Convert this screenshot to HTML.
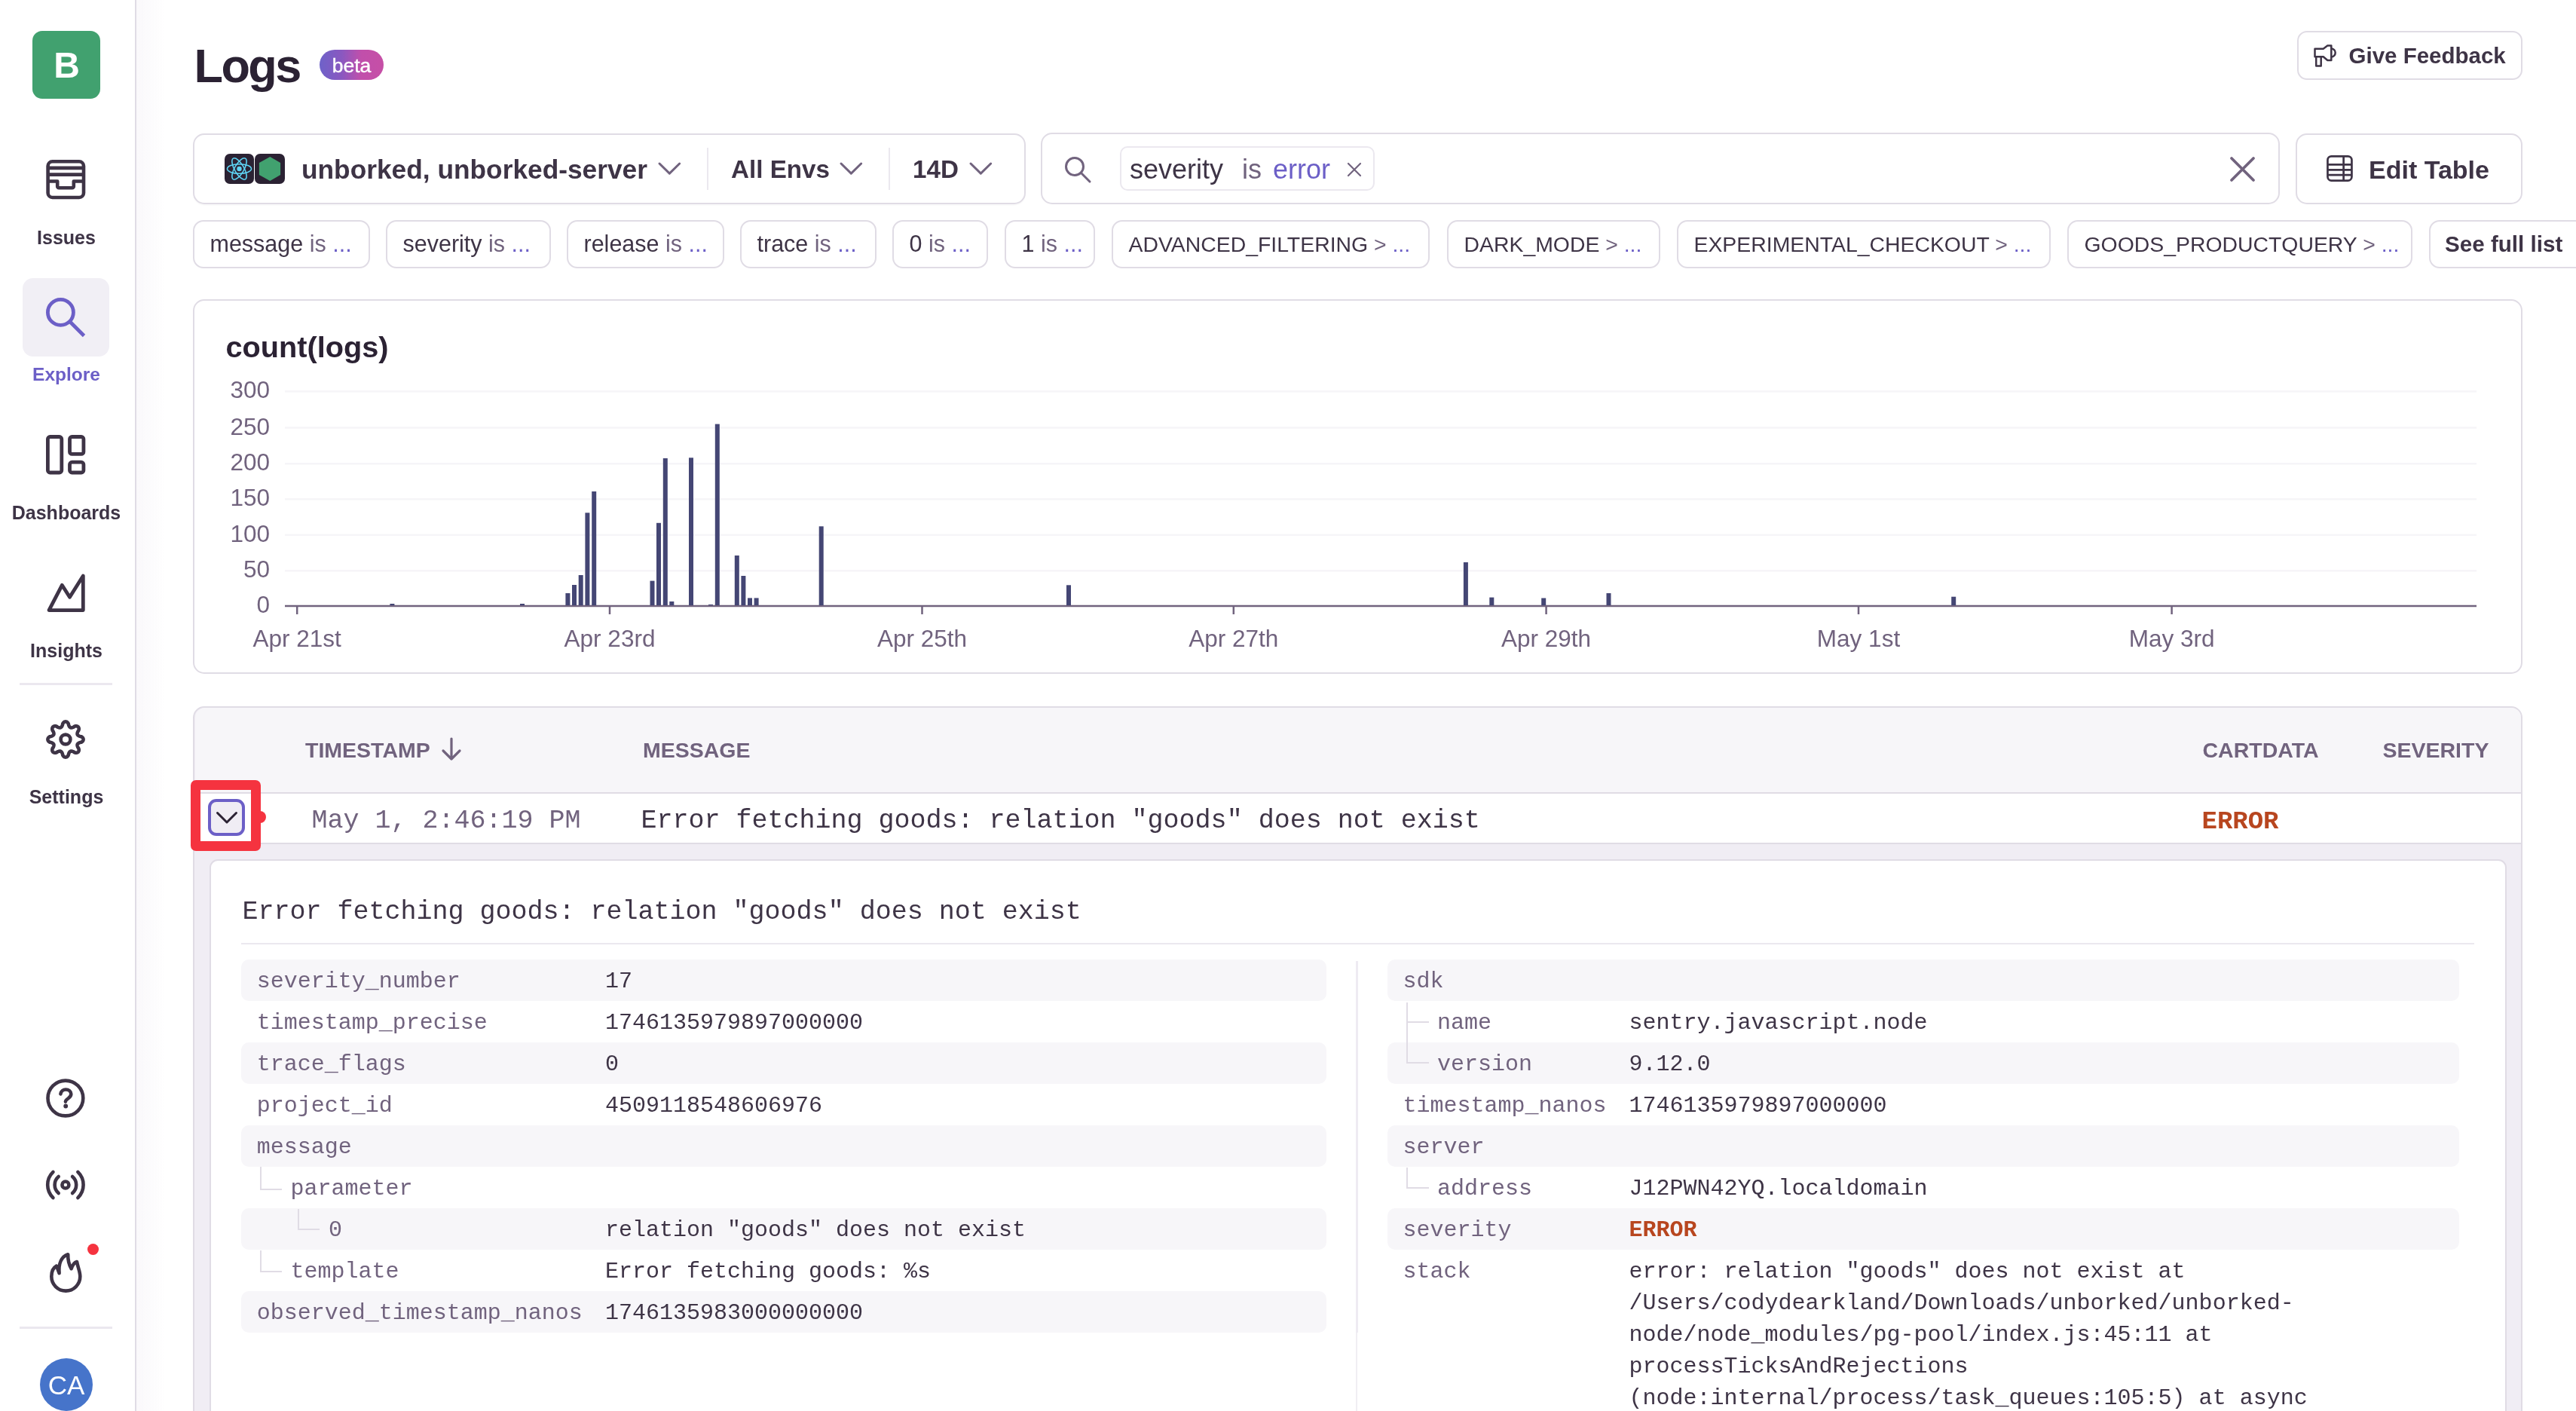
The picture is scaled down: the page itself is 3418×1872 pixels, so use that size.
<!DOCTYPE html>
<html><head><meta charset="utf-8"><style>
html,body{margin:0;padding:0;width:3418px;height:1872px;overflow:hidden;background:#fff;}
.t{position:absolute;white-space:pre;}
#root{position:absolute;left:0;top:0;width:3418px;height:1872px;overflow:hidden;will-change:transform;}
.b{position:absolute;}
</style></head><body><div id="root">
<div class="b" style="left:179px;top:0px;width:2px;height:1872px;background:#e0dce5"></div>
<div class="b" style="left:181px;top:0px;width:39px;height:1872px;background:linear-gradient(90deg,rgba(240,236,243,0.35),rgba(255,255,255,0))"></div>
<div class="b" style="left:43px;top:41px;width:90px;height:90px;background:#41a16f;border-radius:13px"></div>
<div class="t" style="left:88.50px;top:63.37px;font-size:48px;line-height:48px;color:#fff;font-weight:700;font-family:'Liberation Sans', sans-serif;transform:translateX(-50%);">B</div>
<svg class="b" style="left:56px;top:207px;" width="62" height="62" viewBox="0 0 62 62" fill="none"><g stroke="#3e3446" stroke-width="4.6" stroke-linejoin="round"><rect x="7.6" y="7.3" width="47.4" height="47.7" rx="6"/><path d="M8 15.9h46.6M8 24.6h46.6M7.6 33.5h12.6v6.8a2 2 0 0 0 2 2h17.6a2 2 0 0 0 2-2v-6.8h13.2"/></g></svg>
<div class="t" style="left:88.00px;top:302.84px;font-size:25px;line-height:25px;color:#3e3446;font-weight:700;font-family:'Liberation Sans', sans-serif;transform:translateX(-50%);">Issues</div>
<div class="b" style="left:30px;top:369px;width:115px;height:104px;background:#f1eff5;border-radius:14px"></div>
<svg class="b" style="left:56px;top:390px;" width="62" height="62" viewBox="0 0 62 62" fill="none"><g stroke="#6c5fc7" stroke-width="4.8"><circle cx="24.4" cy="24.4" r="17"/><path d="M36.5 36.5L55.5 55.5"/></g></svg>
<div class="t" style="left:88.00px;top:485.26px;font-size:24.5px;line-height:24.5px;color:#6c5fc7;font-weight:700;font-family:'Liberation Sans', sans-serif;transform:translateX(-50%);">Explore</div>
<svg class="b" style="left:56px;top:572px;" width="62" height="62" viewBox="0 0 62 62" fill="none"><g stroke="#3e3446" stroke-width="4.8" stroke-linejoin="round"><rect x="7.4" y="7.5" width="18.4" height="47.5" rx="3"/><rect x="36.5" y="7.5" width="18.4" height="22.9" rx="3"/><rect x="36.5" y="41.2" width="18.4" height="13.8" rx="3"/></g></svg>
<div class="t" style="left:88.00px;top:667.84px;font-size:25px;line-height:25px;color:#3e3446;font-weight:700;font-family:'Liberation Sans', sans-serif;transform:translateX(-50%);">Dashboards</div>
<svg class="b" style="left:56px;top:755px;" width="62" height="62" viewBox="0 0 62 62" fill="none"><g stroke="#3e3446" stroke-width="4.8" stroke-linejoin="round" stroke-linecap="round"><path d="M9 54.6L26.3 21.3L36.5 37.2L54.3 9V54.6Z"/></g></svg>
<div class="t" style="left:88.00px;top:850.84px;font-size:25px;line-height:25px;color:#3e3446;font-weight:700;font-family:'Liberation Sans', sans-serif;transform:translateX(-50%);">Insights</div>
<div class="b" style="left:26px;top:906px;width:123px;height:3px;background:#ebe8ef"></div>
<svg class="b" style="left:56px;top:942px;" width="62" height="78" viewBox="0 0 62 78" fill="none"><g stroke="#3e3446" stroke-width="4.6" stroke-linejoin="round"><path d="M31.00 15.40 L31.62 15.46 L32.22 15.63 L32.82 15.93 L33.38 16.33 L33.91 16.86 L34.40 17.52 L34.82 18.37 L35.08 19.81 L35.40 20.67 L35.73 21.35 L36.06 21.92 L36.39 22.40 L36.74 22.78 L37.11 23.08 L37.51 23.29 L37.94 23.42 L38.41 23.47 L38.92 23.45 L39.50 23.35 L40.13 23.18 L40.85 22.93 L41.69 22.54 L42.88 21.71 L43.78 21.40 L44.59 21.28 L45.34 21.29 L46.03 21.40 L46.66 21.61 L47.21 21.92 L47.69 22.31 L48.08 22.79 L48.39 23.34 L48.60 23.97 L48.71 24.66 L48.72 25.41 L48.60 26.22 L48.29 27.12 L47.46 28.31 L47.07 29.15 L46.82 29.87 L46.65 30.50 L46.55 31.08 L46.53 31.59 L46.58 32.06 L46.71 32.49 L46.92 32.89 L47.22 33.26 L47.60 33.61 L48.08 33.94 L48.65 34.27 L49.33 34.60 L50.19 34.92 L51.63 35.18 L52.48 35.60 L53.14 36.09 L53.67 36.62 L54.07 37.18 L54.37 37.78 L54.54 38.38 L54.60 39.00 L54.54 39.62 L54.37 40.22 L54.07 40.82 L53.67 41.38 L53.14 41.91 L52.48 42.40 L51.63 42.82 L50.19 43.08 L49.33 43.40 L48.65 43.73 L48.08 44.06 L47.60 44.39 L47.22 44.74 L46.92 45.11 L46.71 45.51 L46.58 45.94 L46.53 46.41 L46.55 46.92 L46.65 47.50 L46.82 48.13 L47.07 48.85 L47.46 49.69 L48.29 50.88 L48.60 51.78 L48.72 52.59 L48.71 53.34 L48.60 54.03 L48.39 54.66 L48.08 55.21 L47.69 55.69 L47.21 56.08 L46.66 56.39 L46.03 56.60 L45.34 56.71 L44.59 56.72 L43.78 56.60 L42.88 56.29 L41.69 55.46 L40.85 55.07 L40.13 54.82 L39.50 54.65 L38.92 54.55 L38.41 54.53 L37.94 54.58 L37.51 54.71 L37.11 54.92 L36.74 55.22 L36.39 55.60 L36.06 56.08 L35.73 56.65 L35.40 57.33 L35.08 58.19 L34.82 59.63 L34.40 60.48 L33.91 61.14 L33.38 61.67 L32.82 62.07 L32.22 62.37 L31.62 62.54 L31.00 62.60 L30.38 62.54 L29.78 62.37 L29.18 62.07 L28.62 61.67 L28.09 61.14 L27.60 60.48 L27.18 59.63 L26.92 58.19 L26.60 57.33 L26.27 56.65 L25.94 56.08 L25.61 55.60 L25.26 55.22 L24.89 54.92 L24.49 54.71 L24.06 54.58 L23.59 54.53 L23.08 54.55 L22.50 54.65 L21.87 54.82 L21.15 55.07 L20.31 55.46 L19.12 56.29 L18.22 56.60 L17.41 56.72 L16.66 56.71 L15.97 56.60 L15.34 56.39 L14.79 56.08 L14.31 55.69 L13.92 55.21 L13.61 54.66 L13.40 54.03 L13.29 53.34 L13.28 52.59 L13.40 51.78 L13.71 50.88 L14.54 49.69 L14.93 48.85 L15.18 48.13 L15.35 47.50 L15.45 46.92 L15.47 46.41 L15.42 45.94 L15.29 45.51 L15.08 45.11 L14.78 44.74 L14.40 44.39 L13.92 44.06 L13.35 43.73 L12.67 43.40 L11.81 43.08 L10.37 42.82 L9.52 42.40 L8.86 41.91 L8.33 41.38 L7.93 40.82 L7.63 40.22 L7.46 39.62 L7.40 39.00 L7.46 38.38 L7.63 37.78 L7.93 37.18 L8.33 36.62 L8.86 36.09 L9.52 35.60 L10.37 35.18 L11.81 34.92 L12.67 34.60 L13.35 34.27 L13.92 33.94 L14.40 33.61 L14.78 33.26 L15.08 32.89 L15.29 32.49 L15.42 32.06 L15.47 31.59 L15.45 31.08 L15.35 30.50 L15.18 29.87 L14.93 29.15 L14.54 28.31 L13.71 27.12 L13.40 26.22 L13.28 25.41 L13.29 24.66 L13.40 23.97 L13.61 23.34 L13.92 22.79 L14.31 22.31 L14.79 21.92 L15.34 21.61 L15.97 21.40 L16.66 21.29 L17.41 21.28 L18.22 21.40 L19.12 21.71 L20.31 22.54 L21.15 22.93 L21.87 23.18 L22.50 23.35 L23.08 23.45 L23.59 23.47 L24.06 23.42 L24.49 23.29 L24.89 23.08 L25.26 22.78 L25.61 22.40 L25.94 21.92 L26.27 21.35 L26.60 20.67 L26.92 19.81 L27.18 18.37 L27.60 17.52 L28.09 16.86 L28.62 16.33 L29.18 15.93 L29.78 15.63 L30.38 15.46Z"/><circle cx="31" cy="39" r="6.4"/></g></svg>
<div class="t" style="left:88.00px;top:1044.84px;font-size:25px;line-height:25px;color:#3e3446;font-weight:700;font-family:'Liberation Sans', sans-serif;transform:translateX(-50%);">Settings</div>
<svg class="b" style="left:56px;top:1425px;" width="62" height="62" viewBox="0 0 62 62" fill="none"><g stroke="#3e3446" stroke-width="4.6" stroke-linecap="round"><circle cx="30.9" cy="32" r="23.4"/><path d="M24.4 26.4C25 22.5 28 20.5 31.2 20.5C35.2 20.5 38.3 23.2 38.3 26.6C38.3 30.2 35.3 31.5 33.2 33.3C31.6 34.6 30.9 35.6 30.9 36.6"/></g><circle cx="31.2" cy="42.5" r="2.9" fill="#3e3446"/></svg>
<svg class="b" style="left:56px;top:1541px;" width="62" height="62" viewBox="0 0 62 62" fill="none"><g stroke="#3e3446" stroke-width="4.6" stroke-linecap="round"><circle cx="30.9" cy="31" r="4.5"/><path d="M21.71 20.05A14.3 14.3 0 0 0 21.71 41.95M40.09 20.05A14.3 14.3 0 0 1 40.09 41.95M14.44 13.95A23.7 23.7 0 0 0 14.44 48.05M47.36 13.95A23.7 23.7 0 0 1 47.36 48.05"/></g></svg>
<svg class="b" style="left:56px;top:1656px;" width="62" height="62" viewBox="0 0 62 62" fill="none"><g stroke="#3e3446" stroke-width="4.6" stroke-linejoin="round" stroke-linecap="round"><path d="M22.6 33.2L19 23.5C14.5 26 12.3 31 12.3 37.6A19 19 0 0 0 50.3 37.6C50.3 31 47.6 26.5 46 18C42.5 19 40.3 22 38.6 27.2C35.5 21.5 34 15 34.2 8.2C25.5 11 21.5 20.5 22.6 33.2Z"/></g></svg>
<div class="b" style="left:116px;top:1650px;width:15px;height:15px;background:#f5333f;border-radius:50%"></div>
<div class="b" style="left:26px;top:1760px;width:123px;height:3px;background:#ebe8ef"></div>
<div class="b" style="left:53px;top:1802px;width:70px;height:70px;background:#4674ca;border-radius:50%"></div>
<div class="t" style="left:88.00px;top:1820.37px;font-size:35px;line-height:35px;color:#fff;font-weight:400;font-family:'Liberation Sans', sans-serif;transform:translateX(-50%);">CA</div>
<div class="t" style="left:257.50px;top:56.17px;font-size:63px;line-height:63px;color:#2b2233;font-weight:700;font-family:'Liberation Sans', sans-serif;letter-spacing:-2.6px">Logs</div>
<div class="b" style="left:424px;top:66px;width:85px;height:40px;border-radius:20px;background:linear-gradient(90deg,#6e62c9 0%,#8a58c0 35%,#c14fab 65%,#c64fa6 100%)"></div>
<div class="t" style="left:466.50px;top:73.57px;font-size:26.5px;line-height:26.5px;color:#fff;font-weight:400;font-family:'Liberation Sans', sans-serif;transform:translateX(-50%);-webkit-text-stroke:0.4px #fff">beta</div>
<div class="b" style="left:3048px;top:41px;width:299px;height:65px;border:2px solid #e0dce5;border-radius:13px;box-sizing:border-box;background:#fff"></div>
<svg class="b" style="left:3066px;top:56px;" width="38" height="36" viewBox="0 0 38 36" fill="none"><g stroke="#3e3446" stroke-width="2.5" stroke-linejoin="round"><path d="M5.5 8.7H16.7L22.3 4.6H27.3V24H22.3L16.7 19.2H5.5Z"/><path d="M7.2 19.2V31.4H13.7V19.2"/><path d="M27.3 8.6A5.4 5.4 0 0 1 27.3 19.4"/></g></svg>
<div class="t" style="left:3116.50px;top:59.03px;font-size:29.5px;line-height:29.5px;color:#3e3446;font-weight:700;font-family:'Liberation Sans', sans-serif;">Give Feedback</div>
<div class="b" style="left:256px;top:177px;width:1105px;height:94px;border:2px solid #e0dce5;border-radius:15px;box-sizing:border-box;background:#fff;box-shadow:0 2px 0 rgba(0,0,0,0.02)"></div>
<div class="b" style="left:298px;top:204px;width:39px;height:40px;background:#2b2233;border-radius:7px"></div>
<svg class="b" style="left:298px;top:204px;" width="39" height="40" viewBox="0 0 39 40" fill="none"><g stroke="#5ed3f3" stroke-width="1.6" fill="none"><ellipse cx="19.5" cy="20" rx="16" ry="6.2"/><ellipse cx="19.5" cy="20" rx="16" ry="6.2" transform="rotate(60 19.5 20)"/><ellipse cx="19.5" cy="20" rx="16" ry="6.2" transform="rotate(120 19.5 20)"/></g><circle cx="19.5" cy="20" r="3.2" fill="#5ed3f3"/></svg>
<div class="b" style="left:338px;top:204px;width:40px;height:40px;background:#2b2233;border-radius:7px"></div>
<svg class="b" style="left:338px;top:204px;" width="40" height="40" viewBox="0 0 40 40" fill="none"><path d="M20.3 4L34.1 12V28L20.3 36L5.9 28V12Z" fill="#41a16f"/></svg>
<div class="t" style="left:400.00px;top:206.62px;font-size:35.3px;line-height:35.3px;color:#3e3446;font-weight:700;font-family:'Liberation Sans', sans-serif;">unborked, unborked-server</div>
<svg class="b" style="left:870.9499999999999px;top:212.7px;" width="34.7" height="21.1" viewBox="0 0 34.7 21.1" fill="none"><path d="M4 4l13.35 13.1l13.35 -13.1" stroke="#71637e" stroke-width="3" stroke-linecap="round" stroke-linejoin="round"/></svg>
<div class="b" style="left:938px;top:196px;width:2px;height:56px;background:#ebe8ef"></div>
<div class="t" style="left:970.00px;top:207.90px;font-size:33.2px;line-height:33.2px;color:#3e3446;font-weight:700;font-family:'Liberation Sans', sans-serif;">All Envs</div>
<svg class="b" style="left:1112.15px;top:212.8px;" width="34.7" height="21.1" viewBox="0 0 34.7 21.1" fill="none"><path d="M4 4l13.35 13.1l13.35 -13.1" stroke="#71637e" stroke-width="3" stroke-linecap="round" stroke-linejoin="round"/></svg>
<div class="b" style="left:1179px;top:196px;width:2px;height:56px;background:#ebe8ef"></div>
<div class="t" style="left:1211.00px;top:207.90px;font-size:33.2px;line-height:33.2px;color:#3e3446;font-weight:700;font-family:'Liberation Sans', sans-serif;">14D</div>
<svg class="b" style="left:1284.15px;top:212.8px;" width="34.7" height="21.1" viewBox="0 0 34.7 21.1" fill="none"><path d="M4 4l13.35 13.1l13.35 -13.1" stroke="#71637e" stroke-width="3" stroke-linecap="round" stroke-linejoin="round"/></svg>
<div class="b" style="left:1381px;top:176px;width:1644px;height:95px;border:2px solid #e0dce5;border-radius:15px;box-sizing:border-box;background:#fff"></div>
<svg class="b" style="left:1408px;top:204px;" width="44" height="44" viewBox="0 0 44 44" fill="none"><g stroke="#71637e" stroke-width="3" stroke-linecap="round"><circle cx="18" cy="17" r="11.5"/><path d="M26.3 25.3L38 37"/></g></svg>
<div class="b" style="left:1486px;top:194px;width:338px;height:59px;border:2px solid #ebe8ef;border-radius:10px;box-sizing:border-box;background:#fff"></div>
<div class="t" style="left:1499.00px;top:206.53px;font-size:36px;line-height:36px;color:#3e3446;font-weight:400;font-family:'Liberation Sans', sans-serif;">severity</div>
<div class="t" style="left:1648.00px;top:206.53px;font-size:36px;line-height:36px;color:#71637e;font-weight:400;font-family:'Liberation Sans', sans-serif;">is</div>
<div class="t" style="left:1689.00px;top:206.53px;font-size:36px;line-height:36px;color:#6c5fc7;font-weight:400;font-family:'Liberation Sans', sans-serif;">error</div>
<svg class="b" style="left:1786px;top:214px;" width="22" height="22" viewBox="0 0 22 22" fill="none"><path d="M3 3l16 16M19 3L3 19" stroke="#71637e" stroke-width="2.2" stroke-linecap="round"/></svg>
<svg class="b" style="left:2957px;top:206px;" width="37" height="37" viewBox="0 0 37 37" fill="none"><path d="M4 4l29 29M33 4L4 33" stroke="#71637e" stroke-width="3.8" stroke-linecap="round"/></svg>
<div class="b" style="left:3046px;top:177px;width:301px;height:94px;border:2px solid #e0dce5;border-radius:15px;box-sizing:border-box;background:#fff"></div>
<svg class="b" style="left:3084px;top:203px;" width="42" height="42" viewBox="0 0 42 42" fill="none"><g stroke="#3e3446" stroke-width="2.7" stroke-linejoin="round"><rect x="4.45" y="4.35" width="32" height="32.2" rx="5"/><path d="M4.5 15.4h32M4.5 22.3h32M4.5 29.2h32M25.6 4.4v32.2"/></g></svg>
<div class="t" style="left:3143.00px;top:207.72px;font-size:34px;line-height:34px;color:#3e3446;font-weight:700;font-family:'Liberation Sans', sans-serif;">Edit Table</div>
<div class="b" style="left:256px;top:292px;width:235px;height:64px;border:2px solid #e0dce5;border-radius:14px;box-sizing:border-box;background:#fff"></div>
<div class="t" style="left:278.50px;top:308.18px;font-size:30.5px;line-height:30.5px;color:#3e3446;font-weight:400;font-family:'Liberation Sans', sans-serif;">message <span style="color:#71637e">is</span> <span style="color:#6c5fc7">...</span></div>
<div class="b" style="left:512px;top:292px;width:219px;height:64px;border:2px solid #e0dce5;border-radius:14px;box-sizing:border-box;background:#fff"></div>
<div class="t" style="left:534.50px;top:308.18px;font-size:30.5px;line-height:30.5px;color:#3e3446;font-weight:400;font-family:'Liberation Sans', sans-serif;">severity <span style="color:#71637e">is</span> <span style="color:#6c5fc7">...</span></div>
<div class="b" style="left:752px;top:292px;width:209px;height:64px;border:2px solid #e0dce5;border-radius:14px;box-sizing:border-box;background:#fff"></div>
<div class="t" style="left:774.50px;top:308.18px;font-size:30.5px;line-height:30.5px;color:#3e3446;font-weight:400;font-family:'Liberation Sans', sans-serif;">release <span style="color:#71637e">is</span> <span style="color:#6c5fc7">...</span></div>
<div class="b" style="left:982px;top:292px;width:181px;height:64px;border:2px solid #e0dce5;border-radius:14px;box-sizing:border-box;background:#fff"></div>
<div class="t" style="left:1004.50px;top:308.18px;font-size:30.5px;line-height:30.5px;color:#3e3446;font-weight:400;font-family:'Liberation Sans', sans-serif;">trace <span style="color:#71637e">is</span> <span style="color:#6c5fc7">...</span></div>
<div class="b" style="left:1184px;top:292px;width:127px;height:64px;border:2px solid #e0dce5;border-radius:14px;box-sizing:border-box;background:#fff"></div>
<div class="t" style="left:1206.50px;top:308.18px;font-size:30.5px;line-height:30.5px;color:#3e3446;font-weight:400;font-family:'Liberation Sans', sans-serif;">0 <span style="color:#71637e">is</span> <span style="color:#6c5fc7">...</span></div>
<div class="b" style="left:1333px;top:292px;width:120px;height:64px;border:2px solid #e0dce5;border-radius:14px;box-sizing:border-box;background:#fff"></div>
<div class="t" style="left:1355.50px;top:308.18px;font-size:30.5px;line-height:30.5px;color:#3e3446;font-weight:400;font-family:'Liberation Sans', sans-serif;">1 <span style="color:#71637e">is</span> <span style="color:#6c5fc7">...</span></div>
<div class="b" style="left:1475px;top:292px;width:422px;height:64px;border:2px solid #e0dce5;border-radius:14px;box-sizing:border-box;background:#fff"></div>
<div class="t" style="left:1497.50px;top:309.96px;font-size:28.4px;line-height:28.4px;color:#3e3446;font-weight:400;font-family:'Liberation Sans', sans-serif;">ADVANCED_FILTERING <span style="color:#71637e">&gt;</span> <span style="color:#6c5fc7">...</span></div>
<div class="b" style="left:1920px;top:292px;width:283px;height:64px;border:2px solid #e0dce5;border-radius:14px;box-sizing:border-box;background:#fff"></div>
<div class="t" style="left:1942.50px;top:309.96px;font-size:28.4px;line-height:28.4px;color:#3e3446;font-weight:400;font-family:'Liberation Sans', sans-serif;">DARK_MODE <span style="color:#71637e">&gt;</span> <span style="color:#6c5fc7">...</span></div>
<div class="b" style="left:2225px;top:292px;width:496px;height:64px;border:2px solid #e0dce5;border-radius:14px;box-sizing:border-box;background:#fff"></div>
<div class="t" style="left:2247.50px;top:309.96px;font-size:28.4px;line-height:28.4px;color:#3e3446;font-weight:400;font-family:'Liberation Sans', sans-serif;">EXPERIMENTAL_CHECKOUT <span style="color:#71637e">&gt;</span> <span style="color:#6c5fc7">...</span></div>
<div class="b" style="left:2743px;top:292px;width:458px;height:64px;border:2px solid #e0dce5;border-radius:14px;box-sizing:border-box;background:#fff"></div>
<div class="t" style="left:2765.50px;top:309.96px;font-size:28.4px;line-height:28.4px;color:#3e3446;font-weight:400;font-family:'Liberation Sans', sans-serif;">GOODS_PRODUCTQUERY <span style="color:#71637e">&gt;</span> <span style="color:#6c5fc7">...</span></div>
<div class="b" style="left:3223px;top:292px;width:237px;height:64px;border:2px solid #e0dce5;border-radius:14px;box-sizing:border-box;background:#fff"></div>
<div class="t" style="left:3244.00px;top:308.94px;font-size:29.6px;line-height:29.6px;color:#3e3446;font-weight:700;font-family:'Liberation Sans', sans-serif;">See full list</div>
<div class="b" style="left:256px;top:397px;width:3091px;height:497px;border:2px solid #e0dce5;border-radius:15px;box-sizing:border-box;background:#fff"></div>
<div class="t" style="left:299.50px;top:441.39px;font-size:39.7px;line-height:39.7px;color:#2b2233;font-weight:700;font-family:'Liberation Sans', sans-serif;">count(logs)</div>
<div class="t" style="left:358.00px;top:502.34px;font-size:31.5px;line-height:31.5px;color:#71637e;font-weight:400;font-family:'Liberation Sans', sans-serif;transform:translateX(-100%);">300</div>
<div class="t" style="left:358.00px;top:550.64px;font-size:31.5px;line-height:31.5px;color:#71637e;font-weight:400;font-family:'Liberation Sans', sans-serif;transform:translateX(-100%);">250</div>
<div class="t" style="left:358.00px;top:598.24px;font-size:31.5px;line-height:31.5px;color:#71637e;font-weight:400;font-family:'Liberation Sans', sans-serif;transform:translateX(-100%);">200</div>
<div class="t" style="left:358.00px;top:645.24px;font-size:31.5px;line-height:31.5px;color:#71637e;font-weight:400;font-family:'Liberation Sans', sans-serif;transform:translateX(-100%);">150</div>
<div class="t" style="left:358.00px;top:692.84px;font-size:31.5px;line-height:31.5px;color:#71637e;font-weight:400;font-family:'Liberation Sans', sans-serif;transform:translateX(-100%);">100</div>
<div class="t" style="left:358.00px;top:740.34px;font-size:31.5px;line-height:31.5px;color:#71637e;font-weight:400;font-family:'Liberation Sans', sans-serif;transform:translateX(-100%);">50</div>
<div class="t" style="left:358.00px;top:787.34px;font-size:31.5px;line-height:31.5px;color:#71637e;font-weight:400;font-family:'Liberation Sans', sans-serif;transform:translateX(-100%);">0</div>
<svg class="b" style="left:0;top:0" width="3418" height="900"><line x1="378" y1="519.3" x2="3286" y2="519.3" stroke="#f6f5f8" stroke-width="2.5"/><line x1="378" y1="567.5999999999999" x2="3286" y2="567.5999999999999" stroke="#f6f5f8" stroke-width="2.5"/><line x1="378" y1="615.1999999999999" x2="3286" y2="615.1999999999999" stroke="#f6f5f8" stroke-width="2.5"/><line x1="378" y1="662.1999999999999" x2="3286" y2="662.1999999999999" stroke="#f6f5f8" stroke-width="2.5"/><line x1="378" y1="709.8" x2="3286" y2="709.8" stroke="#f6f5f8" stroke-width="2.5"/><line x1="378" y1="757.3" x2="3286" y2="757.3" stroke="#f6f5f8" stroke-width="2.5"/><line x1="378" y1="804" x2="3286" y2="804" stroke="#71637e" stroke-width="2.5"/><line x1="394.2" y1="804" x2="394.2" y2="815" stroke="#71637e" stroke-width="2.5"/><line x1="809" y1="804" x2="809" y2="815" stroke="#71637e" stroke-width="2.5"/><line x1="1223.5" y1="804" x2="1223.5" y2="815" stroke="#71637e" stroke-width="2.5"/><line x1="1636.8" y1="804" x2="1636.8" y2="815" stroke="#71637e" stroke-width="2.5"/><line x1="2051.6" y1="804" x2="2051.6" y2="815" stroke="#71637e" stroke-width="2.5"/><line x1="2466" y1="804" x2="2466" y2="815" stroke="#71637e" stroke-width="2.5"/><line x1="2881.6" y1="804" x2="2881.6" y2="815" stroke="#71637e" stroke-width="2.5"/><rect x="517.4" y="801" width="6" height="2" fill="#444674"/><rect x="690" y="801" width="6" height="2" fill="#444674"/><rect x="750.4" y="787" width="6" height="16" fill="#444674"/><rect x="759" y="776" width="6" height="27" fill="#444674"/><rect x="767.7" y="763" width="6" height="40" fill="#444674"/><rect x="776.4" y="680.3" width="6" height="122.70000000000005" fill="#444674"/><rect x="785.2" y="652" width="6" height="151" fill="#444674"/><rect x="862.5" y="770.6" width="6" height="32.39999999999998" fill="#444674"/><rect x="871" y="693.8" width="6" height="109.20000000000005" fill="#444674"/><rect x="879.8" y="608" width="6" height="195" fill="#444674"/><rect x="888.3" y="798" width="6" height="5" fill="#444674"/><rect x="914" y="607.3" width="6" height="195.70000000000005" fill="#444674"/><rect x="940" y="802" width="6" height="1" fill="#444674"/><rect x="948.8" y="562.6" width="6" height="240.39999999999998" fill="#444674"/><rect x="974.8" y="737" width="6" height="66" fill="#444674"/><rect x="983.4" y="764" width="6" height="39" fill="#444674"/><rect x="992" y="793.4" width="6" height="9.600000000000023" fill="#444674"/><rect x="1000.6" y="793.4" width="6" height="9.600000000000023" fill="#444674"/><rect x="1086.7" y="698.3" width="6" height="104.70000000000005" fill="#444674"/><rect x="1415" y="776.3" width="6" height="26.700000000000045" fill="#444674"/><rect x="1941.9" y="746" width="6" height="57" fill="#444674"/><rect x="1976.3" y="792.6" width="6" height="10.399999999999977" fill="#444674"/><rect x="2045.2" y="793.5" width="6" height="9.5" fill="#444674"/><rect x="2131.5" y="787" width="6" height="16" fill="#444674"/><rect x="2589.2" y="791.7" width="6" height="11.299999999999955" fill="#444674"/></svg>
<div class="t" style="left:394.20px;top:832.34px;font-size:31.5px;line-height:31.5px;color:#71637e;font-weight:400;font-family:'Liberation Sans', sans-serif;transform:translateX(-50%);">Apr 21st</div>
<div class="t" style="left:809.00px;top:832.34px;font-size:31.5px;line-height:31.5px;color:#71637e;font-weight:400;font-family:'Liberation Sans', sans-serif;transform:translateX(-50%);">Apr 23rd</div>
<div class="t" style="left:1223.50px;top:832.34px;font-size:31.5px;line-height:31.5px;color:#71637e;font-weight:400;font-family:'Liberation Sans', sans-serif;transform:translateX(-50%);">Apr 25th</div>
<div class="t" style="left:1636.80px;top:832.34px;font-size:31.5px;line-height:31.5px;color:#71637e;font-weight:400;font-family:'Liberation Sans', sans-serif;transform:translateX(-50%);">Apr 27th</div>
<div class="t" style="left:2051.60px;top:832.34px;font-size:31.5px;line-height:31.5px;color:#71637e;font-weight:400;font-family:'Liberation Sans', sans-serif;transform:translateX(-50%);">Apr 29th</div>
<div class="t" style="left:2466.00px;top:832.34px;font-size:31.5px;line-height:31.5px;color:#71637e;font-weight:400;font-family:'Liberation Sans', sans-serif;transform:translateX(-50%);">May 1st</div>
<div class="t" style="left:2881.60px;top:832.34px;font-size:31.5px;line-height:31.5px;color:#71637e;font-weight:400;font-family:'Liberation Sans', sans-serif;transform:translateX(-50%);">May 3rd</div>
<div class="b" style="left:256px;top:937px;width:3091px;height:963px;border:2px solid #e0dce5;border-radius:15px;box-sizing:border-box;background:#f0edf4"></div>
<div class="b" style="left:259px;top:939px;width:3086px;height:113px;background:#f7f6f9;border-radius:13px 13px 0 0"></div>
<div class="b" style="left:259px;top:1051px;width:3086px;height:2px;background:#e0dce5"></div>
<div class="b" style="left:259px;top:1053px;width:3086px;height:65px;background:#fff"></div>
<div class="b" style="left:259px;top:1118px;width:3086px;height:2px;background:#e0dce5"></div>
<div class="t" style="left:405.00px;top:980.87px;font-size:28.5px;line-height:28.5px;color:#71637e;font-weight:700;font-family:'Liberation Sans', sans-serif;">TIMESTAMP</div>
<svg class="b" style="left:583px;top:977px;" width="32" height="34" viewBox="0 0 32 34" fill="none"><path d="M16 3v27M5 19l11 11 11-11" stroke="#71637e" stroke-width="3.2" stroke-linecap="round" stroke-linejoin="round"/></svg>
<div class="t" style="left:853.00px;top:980.87px;font-size:28.5px;line-height:28.5px;color:#71637e;font-weight:700;font-family:'Liberation Sans', sans-serif;">MESSAGE</div>
<div class="t" style="left:2922.50px;top:980.87px;font-size:28.5px;line-height:28.5px;color:#71637e;font-weight:700;font-family:'Liberation Sans', sans-serif;">CARTDATA</div>
<div class="t" style="left:3161.50px;top:980.87px;font-size:28.5px;line-height:28.5px;color:#71637e;font-weight:700;font-family:'Liberation Sans', sans-serif;">SEVERITY</div>
<div class="t" style="left:413.50px;top:1072.17px;font-size:35px;line-height:35px;color:#71637e;font-weight:400;font-family:'Liberation Mono', monospace;">May 1, 2:46:19 PM</div>
<div class="t" style="left:850.50px;top:1072.17px;font-size:35px;line-height:35px;color:#3e3446;font-weight:400;font-family:'Liberation Mono', monospace;">Error fetching goods: relation "goods" does not exist</div>
<div class="t" style="left:2921.50px;top:1072.94px;font-size:34px;line-height:34px;color:#b8461f;font-weight:700;font-family:'Liberation Mono', monospace;">ERROR</div>
<div class="b" style="left:278px;top:1140px;width:3048px;height:760px;border:2px solid #e0dce5;border-radius:11px;box-sizing:border-box;background:#fff"></div>
<div class="t" style="left:321.50px;top:1193.17px;font-size:35px;line-height:35px;color:#3e3446;font-weight:400;font-family:'Liberation Mono', monospace;">Error fetching goods: relation "goods" does not exist</div>
<div class="b" style="left:320px;top:1251px;width:2963px;height:2px;background:#ebe8ef"></div>
<div class="b" style="left:1799px;top:1275px;width:3px;height:493px;background:#eeebf2"></div>
<div class="b" style="left:1799px;top:1768px;width:2px;height:132px;background:#f0eef3"></div>
<div class="b" style="left:320px;top:1273px;width:1440px;height:55px;background:#f7f6f9;border-radius:10px"></div>
<div class="t" style="left:340.70px;top:1287.01px;font-size:30px;line-height:30px;color:#71637e;font-weight:400;font-family:'Liberation Mono', monospace;">severity_number</div>
<div class="t" style="left:803.00px;top:1287.01px;font-size:30px;line-height:30px;color:#3e3446;font-weight:400;font-family:'Liberation Mono', monospace;">17</div>
<div class="t" style="left:340.70px;top:1342.01px;font-size:30px;line-height:30px;color:#71637e;font-weight:400;font-family:'Liberation Mono', monospace;">timestamp_precise</div>
<div class="t" style="left:803.00px;top:1342.01px;font-size:30px;line-height:30px;color:#3e3446;font-weight:400;font-family:'Liberation Mono', monospace;">1746135979897000000</div>
<div class="b" style="left:320px;top:1383px;width:1440px;height:55px;background:#f7f6f9;border-radius:10px"></div>
<div class="t" style="left:340.70px;top:1397.01px;font-size:30px;line-height:30px;color:#71637e;font-weight:400;font-family:'Liberation Mono', monospace;">trace_flags</div>
<div class="t" style="left:803.00px;top:1397.01px;font-size:30px;line-height:30px;color:#3e3446;font-weight:400;font-family:'Liberation Mono', monospace;">0</div>
<div class="t" style="left:340.70px;top:1452.01px;font-size:30px;line-height:30px;color:#71637e;font-weight:400;font-family:'Liberation Mono', monospace;">project_id</div>
<div class="t" style="left:803.00px;top:1452.01px;font-size:30px;line-height:30px;color:#3e3446;font-weight:400;font-family:'Liberation Mono', monospace;">4509118548606976</div>
<div class="b" style="left:320px;top:1493px;width:1440px;height:55px;background:#f7f6f9;border-radius:10px"></div>
<div class="t" style="left:340.70px;top:1507.01px;font-size:30px;line-height:30px;color:#71637e;font-weight:400;font-family:'Liberation Mono', monospace;">message</div>
<div class="t" style="left:385.50px;top:1562.01px;font-size:30px;line-height:30px;color:#71637e;font-weight:400;font-family:'Liberation Mono', monospace;">parameter</div>
<div class="b" style="left:320px;top:1603px;width:1440px;height:55px;background:#f7f6f9;border-radius:10px"></div>
<div class="t" style="left:436.00px;top:1617.01px;font-size:30px;line-height:30px;color:#71637e;font-weight:400;font-family:'Liberation Mono', monospace;">0</div>
<div class="t" style="left:803.00px;top:1617.01px;font-size:30px;line-height:30px;color:#3e3446;font-weight:400;font-family:'Liberation Mono', monospace;">relation "goods" does not exist</div>
<div class="t" style="left:385.50px;top:1672.01px;font-size:30px;line-height:30px;color:#71637e;font-weight:400;font-family:'Liberation Mono', monospace;">template</div>
<div class="t" style="left:803.00px;top:1672.01px;font-size:30px;line-height:30px;color:#3e3446;font-weight:400;font-family:'Liberation Mono', monospace;">Error fetching goods: %s</div>
<div class="b" style="left:320px;top:1713px;width:1440px;height:55px;background:#f7f6f9;border-radius:10px"></div>
<div class="t" style="left:340.70px;top:1727.01px;font-size:30px;line-height:30px;color:#71637e;font-weight:400;font-family:'Liberation Mono', monospace;">observed_timestamp_nanos</div>
<div class="t" style="left:803.00px;top:1727.01px;font-size:30px;line-height:30px;color:#3e3446;font-weight:400;font-family:'Liberation Mono', monospace;">1746135983000000000</div>
<div class="b" style="left:344.5px;top:1548px;width:2.0px;height:31px;background:#e0dce5"></div>
<div class="b" style="left:344.5px;top:1577px;width:29.5px;height:2px;background:#e0dce5"></div>
<div class="b" style="left:395px;top:1604px;width:2px;height:28px;background:#e0dce5"></div>
<div class="b" style="left:395px;top:1630px;width:29px;height:2px;background:#e0dce5"></div>
<div class="b" style="left:344.5px;top:1659px;width:2.0px;height:29px;background:#e0dce5"></div>
<div class="b" style="left:344.5px;top:1686px;width:29.5px;height:2px;background:#e0dce5"></div>
<div class="b" style="left:1841px;top:1273px;width:1422px;height:55px;background:#f7f6f9;border-radius:10px"></div>
<div class="t" style="left:1861.40px;top:1287.01px;font-size:30px;line-height:30px;color:#71637e;font-weight:400;font-family:'Liberation Mono', monospace;">sdk</div>
<div class="t" style="left:1907.00px;top:1342.01px;font-size:30px;line-height:30px;color:#71637e;font-weight:400;font-family:'Liberation Mono', monospace;">name</div>
<div class="t" style="left:2161.50px;top:1342.01px;font-size:30px;line-height:30px;color:#3e3446;font-weight:400;font-family:'Liberation Mono', monospace;">sentry.javascript.node</div>
<div class="b" style="left:1841px;top:1383px;width:1422px;height:55px;background:#f7f6f9;border-radius:10px"></div>
<div class="t" style="left:1907.00px;top:1397.01px;font-size:30px;line-height:30px;color:#71637e;font-weight:400;font-family:'Liberation Mono', monospace;">version</div>
<div class="t" style="left:2161.50px;top:1397.01px;font-size:30px;line-height:30px;color:#3e3446;font-weight:400;font-family:'Liberation Mono', monospace;">9.12.0</div>
<div class="t" style="left:1861.40px;top:1452.01px;font-size:30px;line-height:30px;color:#71637e;font-weight:400;font-family:'Liberation Mono', monospace;">timestamp_nanos</div>
<div class="t" style="left:2161.50px;top:1452.01px;font-size:30px;line-height:30px;color:#3e3446;font-weight:400;font-family:'Liberation Mono', monospace;">1746135979897000000</div>
<div class="b" style="left:1841px;top:1493px;width:1422px;height:55px;background:#f7f6f9;border-radius:10px"></div>
<div class="t" style="left:1861.40px;top:1507.01px;font-size:30px;line-height:30px;color:#71637e;font-weight:400;font-family:'Liberation Mono', monospace;">server</div>
<div class="t" style="left:1907.00px;top:1562.01px;font-size:30px;line-height:30px;color:#71637e;font-weight:400;font-family:'Liberation Mono', monospace;">address</div>
<div class="t" style="left:2161.50px;top:1562.01px;font-size:30px;line-height:30px;color:#3e3446;font-weight:400;font-family:'Liberation Mono', monospace;">J12PWN42YQ.localdomain</div>
<div class="b" style="left:1841px;top:1603px;width:1422px;height:55px;background:#f7f6f9;border-radius:10px"></div>
<div class="t" style="left:1861.40px;top:1617.01px;font-size:30px;line-height:30px;color:#71637e;font-weight:400;font-family:'Liberation Mono', monospace;">severity</div>
<div class="t" style="left:2161.50px;top:1617.01px;font-size:30px;line-height:30px;color:#3e3446;font-weight:400;font-family:'Liberation Mono', monospace;"><span style="color:#b8461f;font-weight:700">ERROR</span></div>
<div class="t" style="left:1861.40px;top:1672.01px;font-size:30px;line-height:30px;color:#71637e;font-weight:400;font-family:'Liberation Mono', monospace;">stack</div>
<div class="b" style="left:1866px;top:1330px;width:2px;height:27px;background:#e0dce5"></div>
<div class="b" style="left:1866px;top:1355px;width:30px;height:2px;background:#e0dce5"></div>
<div class="b" style="left:1866px;top:1357px;width:2px;height:54px;background:#e0dce5"></div>
<div class="b" style="left:1866px;top:1409px;width:30px;height:2px;background:#e0dce5"></div>
<div class="b" style="left:1866px;top:1549px;width:2px;height:28px;background:#e0dce5"></div>
<div class="b" style="left:1866px;top:1575px;width:30px;height:2px;background:#e0dce5"></div>
<div class="t" style="left:2161.50px;top:1672.01px;font-size:30px;line-height:30px;color:#3e3446;font-weight:400;font-family:'Liberation Mono', monospace;">error: relation "goods" does not exist at</div>
<div class="t" style="left:2161.50px;top:1714.01px;font-size:30px;line-height:30px;color:#3e3446;font-weight:400;font-family:'Liberation Mono', monospace;">/Users/codydearkland/Downloads/unborked/unborked-</div>
<div class="t" style="left:2161.50px;top:1756.01px;font-size:30px;line-height:30px;color:#3e3446;font-weight:400;font-family:'Liberation Mono', monospace;">node/node_modules/pg-pool/index.js:45:11 at</div>
<div class="t" style="left:2161.50px;top:1798.01px;font-size:30px;line-height:30px;color:#3e3446;font-weight:400;font-family:'Liberation Mono', monospace;">processTicksAndRejections</div>
<div class="t" style="left:2161.50px;top:1840.01px;font-size:30px;line-height:30px;color:#3e3446;font-weight:400;font-family:'Liberation Mono', monospace;">(node:internal/process/task_queues:105:5) at async</div>
<div class="b" style="left:266px;top:1053px;width:67px;height:63px;background:#fff"></div>
<div class="b" style="left:276px;top:1060px;width:49px;height:49px;border:4px solid #6c5fc7;border-radius:11px;box-sizing:border-box;background:#f0edf4"></div>
<svg class="b" style="left:284px;top:1072px;" width="34" height="24" viewBox="0 0 34 24" fill="none"><path d="M4.5 6.5l12.5 12.5L29.5 6.5" stroke="#2b2233" stroke-width="3" stroke-linecap="round" stroke-linejoin="round"/></svg>
<div class="b" style="left:337px;top:1076px;width:16px;height:16px;background:#f5333f;border-radius:50%"></div>
<div class="b" style="left:253px;top:1035px;width:93px;height:94px;border:13.5px solid #f5333f;border-radius:7px;box-sizing:border-box"></div>
</div></body></html>
